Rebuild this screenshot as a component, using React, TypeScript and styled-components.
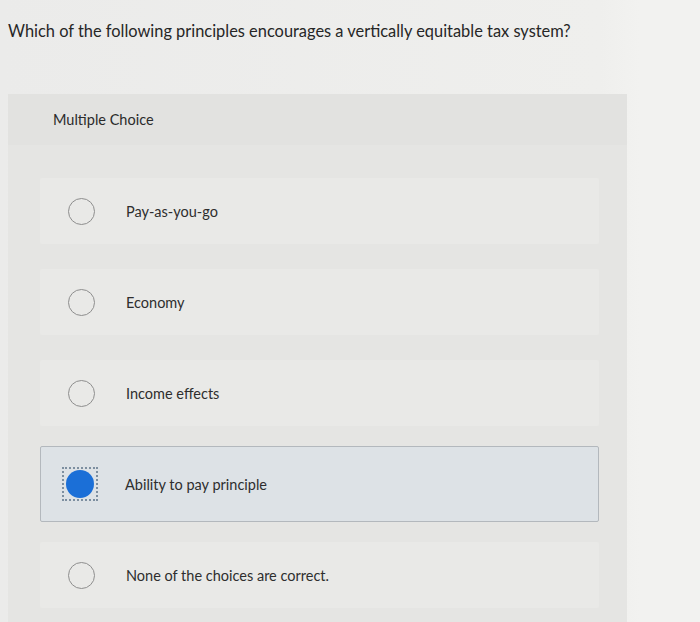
import styled, { createGlobalStyle } from 'styled-components'

const GlobalStyle = createGlobalStyle`
  html, body {
    margin: 0;
    padding: 0;
    background: #eeeeec;
  }
  body {
    font-family: Lato, "Open Sans", sans-serif;
    color: #2b2b2b;
  }
`;

const Page = styled.div`
  width: 700px;
  height: 622px;
  overflow: hidden;
  display: flex;
  background: linear-gradient(to right, #ebebea 0, #efefed 600px, #f2f2f0 640px);
`;

const Main = styled.div`
  width: 627px;
  display: flex;
  flex-direction: column;
`;

const Question = styled.h1`
  margin: 0;
  padding: 21px 0 0 8px;
  height: 94px;
  box-sizing: border-box;
  font-size: 16.4px;
  font-weight: 400;
  color: #262626;
`;

const Panel = styled.section`
  margin-left: 8px;
  flex: 1;
  background: #e5e5e3;
  display: flex;
  flex-direction: column;
`;

const PanelHeader = styled.div`
  height: 51px;
  padding-left: 45px;
  display: flex;
  align-items: center;
  font-size: 14.5px;
  color: #2b2b2b;
  background: #e2e2e0;
`;

const OptionList = styled.ul`
  list-style: none;
  margin: 0;
  padding: 33px 0 0 32px;
  display: flex;
  flex-direction: column;
  gap: 25px;
`;

const Option = styled.li<{ $selected?: boolean }>`
  width: 559px;
  height: ${p => (p.$selected ? '76px' : '66px')};
  margin: ${p => (p.$selected ? '-5px 0' : '0')};
  box-sizing: border-box;
  display: flex;
  align-items: center;
  padding-left: ${p => (p.$selected ? '21px' : '22px')};
  background: ${p => (p.$selected ? '#dde2e6' : '#e9e9e7')};
  border: ${p => (p.$selected ? '1px solid #b3b8bd' : '1px solid transparent')};
  border-radius: 2px;
  font-size: 14.5px;
  color: #2e2e2e;
`;

const RadioSlot = styled.span`
  width: 36px;
  height: 36px;
  display: flex;
  align-items: center;
  justify-content: center;
  margin-right: 27px;
`;

const Radio = styled.span<{ $checked?: boolean }>`
  width: ${p => (p.$checked ? '28px' : '27px')};
  height: ${p => (p.$checked ? '28px' : '27px')};
  border-radius: 50%;
  box-sizing: border-box;
  border: ${p => (p.$checked ? 'none' : '1.5px solid #8e8e8e')};
  background: ${p => (p.$checked ? '#1b6fd7' : 'transparent')};
`;

const FocusRing = styled.span`
  width: 36px;
  height: 34px;
  box-sizing: border-box;
  border: 2px dotted #7d8fa0;
  display: flex;
  align-items: center;
  justify-content: center;
`;

const choices = [
  'Pay-as-you-go',
  'Economy',
  'Income effects',
  'Ability to pay principle',
  'None of the choices are correct.',
];

export default function App() {
  const selected = 3;
  return (
    <Page>
      <GlobalStyle />
      <Main>
        <Question>Which of the following principles encourages a vertically equitable tax system?</Question>
        <Panel>
          <PanelHeader>Multiple Choice</PanelHeader>
          <OptionList>
            {choices.map((c, i) => (
              <Option key={c} $selected={i === selected}>
                <RadioSlot>
                  {i === selected ? (
                    <FocusRing>
                      <Radio $checked />
                    </FocusRing>
                  ) : (
                    <Radio />
                  )}
                </RadioSlot>
                <span>{c}</span>
              </Option>
            ))}
          </OptionList>
        </Panel>
      </Main>
    </Page>
  )
}
